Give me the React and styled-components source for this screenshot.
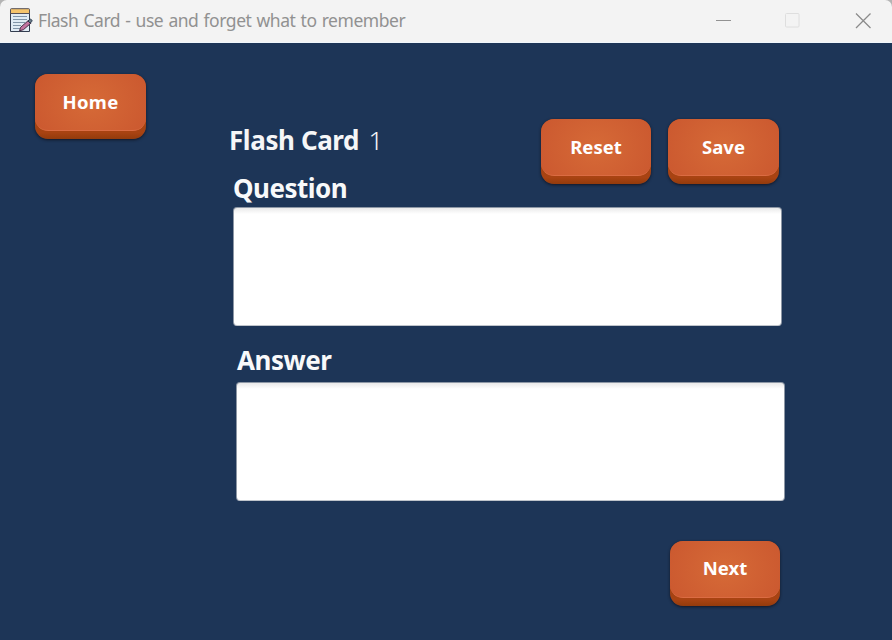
import React from "react";
import styled, { createGlobalStyle } from "styled-components";

const GlobalStyle = createGlobalStyle`
  * { box-sizing: border-box; }
  body { margin: 0; background: #1d3557; overflow: hidden; font-family: "Noto Sans", sans-serif; }
`;

const Window = styled.div`
  width: 892px;
  height: 640px;
  display: flex;
  flex-direction: column;
  background: #1d3557;
`;

const TitleBar = styled.header`
  height: 43px;
  flex: none;
  display: flex;
  align-items: flex-start;
  padding: 8px 17px 0 9px;
  background: #f3f3f3;
  border-bottom: 1px solid #f0f6fb;
  border-radius: 7px 7px 0 0;
  box-shadow: 0 -8px 0 #b4b4b4;
`;

const TitleText = styled.span`
  margin: 0 auto 0 5px;
  font-size: 17.5px;
  line-height: 25px;
  letter-spacing: -0.45px;
  word-spacing: 1px;
  white-space: nowrap;
  color: #919191;
`;

const Controls = styled.div`
  display: flex;
  gap: 50px;
  padding-top: 3px;
`;

const Body = styled.main`
  flex: 1;
  display: flex;
  align-items: flex-start;
`;

const Sidebar = styled.nav`
  width: 229px;
  padding: 31px 0 0 35px;
`;

const Editor = styled.section`
  width: 556px;
  display: flex;
  flex-direction: column;
  padding-top: 76px;
`;

const Toolbar = styled.div`
  height: 66px;
  display: flex;
  align-items: flex-start;
`;

const Heading = styled.h1`
  margin: 1px auto 0 0;
  font-size: 26px;
  line-height: 40px;
  font-weight: 700;
  white-space: nowrap;
  letter-spacing: -0.4px;
  color: #f5f6f7;
`;

const CardNumber = styled.span`
  margin-left: 3px;
  font-weight: 300;
  letter-spacing: 0;
`;

const Actions = styled.div`
  display: flex;
  gap: 17px;
  margin-right: 6px;
`;

const Footer = styled.div`
  display: flex;
  justify-content: flex-end;
  padding: 40px 5px 0 0;
`;

const Field = styled.label`
  display: flex;
  flex-direction: column;
  width: 549px;
  margin-left: ${(p) => p.$indent};
  margin-top: ${(p) => p.$top};
`;

const FieldLabel = styled.span`
  height: ${(p) => p.$height};
  padding-left: ${(p) => p.$shift || "0"};
  font-size: 26px;
  line-height: 34px;
  font-weight: 700;
  letter-spacing: -0.5px;
  color: #f8f9fa;
`;

const TextBox = styled.textarea`
  display: block;
  width: 549px;
  height: 119px;
  margin: 0;
  padding: 8px;
  resize: none;
  outline: none;
  border: 1px solid #8d97a5;
  border-bottom-color: #bfc4cb;
  border-radius: 4px;
  background: linear-gradient(#e9e9e9, #fff 6px);
  font: 18px "Noto Sans", sans-serif;
`;

const PushButton = styled.button`
  display: flex;
  align-items: flex-start;
  width: ${(p) => p.$width};
  height: 65px;
  padding: 0;
  border: 0;
  border-radius: 13px;
  background: linear-gradient(#a34313 75%, #a94312 90%, #933b0c);
  box-shadow: 0 1px 3px rgba(15, 15, 25, 0.8);
`;

const ButtonFace = styled.span`
  flex: 1;
  display: flex;
  align-items: center;
  justify-content: center;
  height: 57px;
  padding-bottom: ${(p) => p.$lift};
  border-radius: 13px;
  border-bottom: 1px solid #db6c43;
  background: radial-gradient(ellipse 58px 50px at center, #d66a37, #cc5a30);
  font: 700 18.5px "Noto Sans", sans-serif;
  letter-spacing: ${(p) => p.$spacing};
  color: #fff;
`;

function Push({ children, width = "111px", spacing = "0", lift = "2px" }) {
  return (
    <PushButton type="button" $width={width}>
      <ButtonFace $spacing={spacing} $lift={lift}>{children}</ButtonFace>
    </PushButton>
  );
}

function NotepadIcon() {
  return (
    <svg width="24" height="25" viewBox="0 0 24 25" fill="none">
      <path d="M1.5 4h19v19.5h-19z" fill="#e0ebf4" stroke="#343e50" />
      <path d="M1.5 1.5Q1.5.7 2.3.7h17.4q.8 0 .8.8v4h-19z" fill="#f5c46c" stroke="#555057" />
      <path d="M4 8.5h14M4 11.5h14M4 14.5h12M4 17.5h8M4 20.5h7" stroke="#8195a8" />
      <path d="M10.5 22.8l1.2-3.6 7.6-6.6 2.6 2.6-7.5 6.5z" fill="#c273a0" stroke="#4b3048" />
      <path d="M19 13l1.6-1.5q.9-.7 1.9.2t.2 1.8l-1.5 1.7z" fill="#687988" stroke="#26394b" />
    </svg>
  );
}

export default function App() {
  return (
    <>
      <GlobalStyle />
      <Window>
        <TitleBar>
          <NotepadIcon />
          <TitleText>Flash Card - use and forget what to remember</TitleText>
          <Controls>
            <svg width="20" height="20" fill="none"><path d="M1 9.5h15" stroke="#929292" /></svg>
            <svg width="20" height="20" fill="none"><rect x="0.5" y="2.5" width="13.5" height="13.5" rx="1" stroke="#dedede" /></svg>
            <svg width="20" height="20" fill="none"><path d="M1 2.5l14.5 14.5M15.5 2.5l-14.5 14.5" stroke="#8b8b8b" strokeWidth="1.3" /></svg>
          </Controls>
        </TitleBar>
        <Body>
          <Sidebar><Push spacing="0.3px">Home</Push></Sidebar>
          <Editor>
            <Toolbar>
              <Heading>Flash Card <CardNumber>1</CardNumber></Heading>
              <Actions><Push width="110px">Reset</Push><Push>Save</Push></Actions>
            </Toolbar>
            <Field $indent="4px" $top="-14px">
              <FieldLabel $height="36px">Question</FieldLabel>
              <TextBox />
            </Field>
            <Field $indent="7px" $top="17px">
              <FieldLabel $height="39px" $shift="1px">Answer</FieldLabel>
              <TextBox />
            </Field>
            <Footer><Push width="110px" lift="4px">Next</Push></Footer>
          </Editor>
        </Body>
      </Window>
    </>
  );
}
